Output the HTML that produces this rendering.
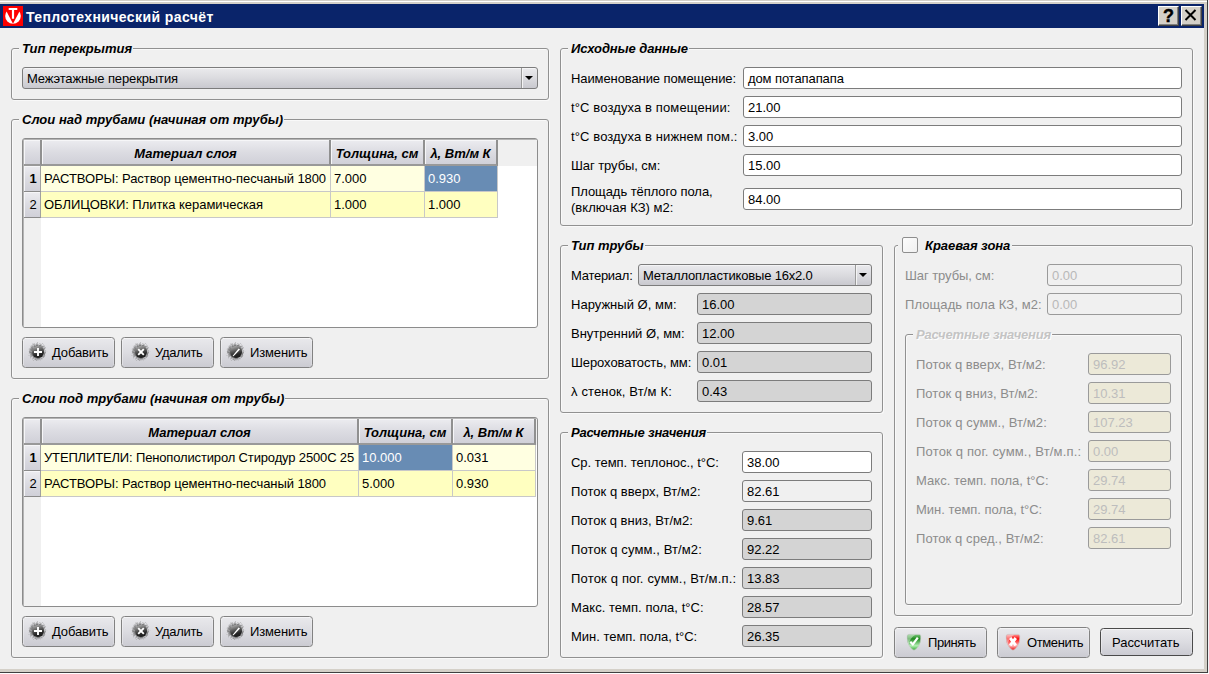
<!DOCTYPE html><html lang="ru"><head><meta charset="utf-8"><title>Теплотехнический расчёт</title><style>
*{box-sizing:border-box;margin:0;padding:0}
html,body{width:1209px;height:674px;overflow:hidden}
body{position:relative;background:#f0f0f0;font:13px "Liberation Sans",sans-serif;color:#000}
.a{position:absolute;white-space:nowrap}
.tb{left:0;top:4px;width:1204px;height:24px;background:#0a246a}
.tt{left:26px;top:6px;height:24px;line-height:23px;color:#fff;font-weight:bold;font-size:14px;letter-spacing:.4px}
.gb{border:1px solid #919191;border-radius:3px;box-shadow:1px 1px 0 #f9f9f9,inset 1px 1px 0 #f9f9f9}
.gt{font-weight:bold;font-style:italic;background:#f0f0f0;padding:0 1px 0 3px;height:16px;line-height:17px}
.gt.d{color:#c4c4c4;text-shadow:1px 1px 0 #fff}
.l{height:22px;line-height:23px}
.l.d{color:#8c8c8c}
.f{height:22px;line-height:22px;border:1px solid #7c7c7c;border-radius:3px;background:#fff;padding-left:4px}
.f.g{background:#d4d4d4}
.f.e{background:#f0f0f0}
.f.d{background:#f0f0f0;color:#b8b8b8;border-color:#9a9a9a}
.f.y{background:#ece9d8;color:#bdbdbd;border-color:#9a9a9a}
.cb{height:22px;line-height:22px;border:1px solid #7c7c7c;border-radius:3px;background:linear-gradient(#eaeaed,#dbdbdf 50%,#c9c9cf);padding-left:4px;box-shadow:inset 0 1px 0 rgba(255,255,255,.5)}
.cb i{position:absolute;right:15px;top:0;width:1px;height:20px;background:#9a9a9a;box-shadow:1px 0 0 #f4f4f4}
.cb b{position:absolute;right:4px;top:8px;width:0;height:0;border:4px solid transparent;border-top:4px solid #000;border-bottom:0}
.bt{height:30px;line-height:28px;border:1px solid #828282;border-radius:3.5px;background:linear-gradient(#e9e9ec,#dcdce1 50%,#cbcbd2);box-shadow:inset 0 1px 0 rgba(255,255,255,.5),inset 1px 0 0 rgba(255,255,255,.35),inset -1px 0 0 rgba(255,255,255,.2)}
.bt span{position:absolute;top:0}
.tbl{border:1px solid #8c8c8c;border-radius:3px;background:#fff;box-shadow:inset 1px 1px 0 #b4b4b4}
.hd{background:linear-gradient(#ececf0,#dcdce2 50%,#d0d0d8);border-right:2px solid #909090;border-bottom:2px solid #999;font-weight:bold;font-style:italic;text-align:center;line-height:27px;box-shadow:inset 1px 1px 0 #f6f6f8}
.rh{background:linear-gradient(#ececf0,#dcdce2 50%,#d0d0d8);border-right:1px solid #a0a0a0;border-bottom:1px solid #8a8a8a;text-align:center;line-height:26px;padding-left:2px;box-shadow:inset 1px 1px 0 #f6f6f8}
.c{overflow:hidden;line-height:25px;padding-left:3px;border-right:1px solid #c8c8c8;border-bottom:1px solid #c8c8c8}
.r1{background:#ffffe1}.r2{background:#ffffc0}
.sel{background:#688cb4;color:#fff}
</style></head><body>
<svg class="a" width="0" height="0" style="left:0;top:0"><defs><filter id="gr" x="-20%" y="-20%" width="140%" height="140%"><feTurbulence type="fractalNoise" baseFrequency="0.550" numOctaves="2" seed="7" result="n"/><feDisplacementMap in="SourceGraphic" in2="n" scale="5" xChannelSelector="R" yChannelSelector="G"/></filter><radialGradient id="sg"><stop offset="0" stop-color="#4a4a4a" stop-opacity=".85"/><stop offset=".68" stop-color="#606060" stop-opacity=".72"/><stop offset=".85" stop-color="#787878" stop-opacity=".45"/><stop offset="1" stop-color="#8a8a8a" stop-opacity=".1"/></radialGradient><linearGradient id="bg" x1="0.200" y1="0" x2="0.500" y2="1"><stop offset="0" stop-color="#b4b4b4"/><stop offset=".42" stop-color="#5c5c5c"/><stop offset=".75" stop-color="#262626"/><stop offset="1" stop-color="#1a1a1a"/></linearGradient></defs></svg>
<div class="a tb"></div>
<div class="a" style="left:1204px;top:0;width:3px;height:672px;background:#d4d0c8"></div>
<div class="a" style="left:1207px;top:0;width:1px;height:673px;background:#404040"></div>
<div class="a" style="left:1208px;top:0;width:1px;height:674px;background:#f2f2f5"></div>
<div class="a" style="left:0;top:0;width:1204px;height:4px;background:#d4d0c8"></div>
<div class="a" style="left:0;top:1px;width:1207px;height:1px;background:#fff"></div>
<div class="a" style="left:0;top:669px;width:1207px;height:3px;background:#d4d0c8"></div>
<div class="a" style="left:0;top:672px;width:1208px;height:1px;background:#404040"></div>
<div class="a" style="left:0;top:673px;width:1209px;height:1px;background:#fff"></div>
<svg class="a" style="left:3px;top:6px" width="20" height="20" viewBox="0 0 20 20"><rect width="20" height="20" fill="#fe0000"/><circle cx="10" cy="10" r="7.8" fill="#fff"/><path d="M1.200 1 L18.800 1 L10 17.800 Z" fill="#fe0000"/><path d="M5.700 2 H14.300 V4.100 H11.100 V12.800 H8.900 V4.100 H5.700 Z" fill="#fff"/></svg>
<div class="a tt" style="left:26px;top:6px;">Теплотехнический расчёт</div>
<div class="a" style="left:1158px;top:6px;width:21px;height:20px;background:#d4d0c8;border:1px solid;border-color:#fff #404040 #404040 #fff;box-shadow:inset -1px -1px 0 #808080"><span class="a" style="left:4px;top:-1px;font:bold 18px 'Liberation Sans',sans-serif;line-height:21px;-webkit-text-stroke:.4px #000">?</span></div>
<div class="a" style="left:1181px;top:6px;width:21px;height:20px;background:#d4d0c8;border:1px solid;border-color:#fff #404040 #404040 #fff;box-shadow:inset -1px -1px 0 #808080"><svg class="a" style="left:2px;top:2px" width="13" height="12" viewBox="0 0 13 12"><path d="M1.500 1 L11.500 11 M11.500 1 L1.500 11" stroke="#000" stroke-width="2"/></svg></div>
<div class="a gb" style="left:11px;top:48px;width:538px;height:52px;"></div>
<div class="a gt" style="left:19px;top:40px;">Тип перекрытия</div>
<div class="a gb" style="left:11px;top:119px;width:538px;height:260px;"></div>
<div class="a gt" style="left:19px;top:111px;letter-spacing:0.021px;">Слои над трубами (начиная от трубы)</div>
<div class="a gb" style="left:11px;top:398px;width:538px;height:260px;"></div>
<div class="a gt" style="left:19px;top:390px;letter-spacing:0.035px;">Слои под трубами (начиная от трубы)</div>
<div class="a gb" style="left:560px;top:48px;width:633px;height:178px;"></div>
<div class="a gt" style="left:568px;top:40px;letter-spacing:-0.093px;">Исходные данные</div>
<div class="a gb" style="left:560px;top:245px;width:323px;height:168px;"></div>
<div class="a gt" style="left:568px;top:237px;">Тип трубы</div>
<div class="a gb" style="left:560px;top:432px;width:323px;height:226px;"></div>
<div class="a gt" style="left:568px;top:424px;letter-spacing:-0.182px;">Расчетные значения</div>
<div class="a gb" style="left:894px;top:245px;width:299px;height:371px;"></div>
<div class="a gt" style="left:-3px;top:237px;"></div>
<div class="a gb" style="left:905px;top:334px;width:277px;height:271px;"></div>
<div class="a gt d" style="left:913px;top:326px;letter-spacing:-0.182px;">Расчетные значения</div>
<div class="a cb" style="left:22px;top:67px;width:516px;height:22px;"><span style="letter-spacing:-0.117px;">Межэтажные перекрытия</span><i></i><b></b></div>
<div class="a tbl" style="left:22px;top:138px;width:516px;height:190px;"></div>
<div class="a hd" style="left:24px;top:140px;width:18px;height:26px;"></div>
<div class="a hd" style="left:42px;top:140px;width:289px;height:26px;">Материал слоя</div>
<div class="a hd" style="left:331px;top:140px;width:94px;height:26px;">Толщина, см</div>
<div class="a hd" style="left:425px;top:140px;width:73px;height:26px;">λ, Вт/м К</div>
<div class="a " style="left:498px;top:140px;width:39px;height:26px;background:#f0f0f0"></div>
<div class="a rh" style="left:24px;top:166px;width:17px;height:26px;font-weight:bold">1</div>
<div class="a c r1" style="left:41px;top:166px;width:290px;height:26px;"><span style="letter-spacing:-0.078px;">РАСТВОРЫ: Раствор цементно-песчаный 1800</span></div>
<div class="a c r1" style="left:331px;top:166px;width:94px;height:26px;">7.000</div>
<div class="a c sel" style="left:425px;top:166px;width:73px;height:26px;">0.930</div>
<div class="a rh" style="left:24px;top:192px;width:17px;height:26px;">2</div>
<div class="a c r2" style="left:41px;top:192px;width:290px;height:26px;"><span style="letter-spacing:-0.040px;">ОБЛИЦОВКИ: Плитка керамическая</span></div>
<div class="a c r2" style="left:331px;top:192px;width:94px;height:26px;">1.000</div>
<div class="a c r2" style="left:425px;top:192px;width:73px;height:26px;">1.000</div>
<div class="a " style="left:24px;top:218px;width:17px;height:109px;background:#f0f0f0"></div>
<div class="a tbl" style="left:22px;top:417px;width:516px;height:190px;"></div>
<div class="a hd" style="left:24px;top:419px;width:18px;height:26px;"></div>
<div class="a hd" style="left:42px;top:419px;width:317px;height:26px;">Материал слоя</div>
<div class="a hd" style="left:359px;top:419px;width:94px;height:26px;">Толщина, см</div>
<div class="a hd" style="left:453px;top:419px;width:83px;height:26px;">λ, Вт/м К</div>
<div class="a " style="left:536px;top:419px;width:1px;height:26px;background:#f0f0f0"></div>
<div class="a rh" style="left:24px;top:445px;width:17px;height:26px;font-weight:bold">1</div>
<div class="a c r1" style="left:41px;top:445px;width:318px;height:26px;"><span style="letter-spacing:-0.151px;">УТЕПЛИТЕЛИ: Пенополистирол Стиродур 2500С 25</span></div>
<div class="a c sel" style="left:359px;top:445px;width:94px;height:26px;">10.000</div>
<div class="a c r1" style="left:453px;top:445px;width:83px;height:26px;">0.031</div>
<div class="a rh" style="left:24px;top:471px;width:17px;height:26px;">2</div>
<div class="a c r2" style="left:41px;top:471px;width:318px;height:26px;"><span style="letter-spacing:-0.078px;">РАСТВОРЫ: Раствор цементно-песчаный 1800</span></div>
<div class="a c r2" style="left:359px;top:471px;width:94px;height:26px;">5.000</div>
<div class="a c r2" style="left:453px;top:471px;width:83px;height:26px;">0.930</div>
<div class="a " style="left:24px;top:497px;width:17px;height:109px;background:#f0f0f0"></div>
<div class="a bt" style="left:22px;top:337px;width:93px;height:31px;"><svg class="a" style="left:3px;top:2px" width="24" height="24" viewBox="0 0 24 24"><g filter="url(#gr)"><ellipse cx="11.400" cy="11.700" rx="9.200" ry="9.200" fill="url(#sg)"/></g><circle cx="12" cy="12" r="6" fill="url(#bg)"/><path d="M12 8v8M8 12h8" stroke="#fff" stroke-width="1.900"/></svg><span style="left:29px;line-height:29px;letter-spacing:-0.119px;">Добавить</span></div>
<div class="a bt" style="left:121px;top:337px;width:93px;height:31px;"><svg class="a" style="left:7px;top:2px" width="24" height="24" viewBox="0 0 24 24"><g filter="url(#gr)"><ellipse cx="11.400" cy="11.700" rx="9.200" ry="9.200" fill="url(#sg)"/></g><circle cx="12" cy="12" r="6" fill="url(#bg)"/><path d="M9.200 9.200l5.600 5.600M14.800 9.200l-5.600 5.600" stroke="#fff" stroke-width="1.900"/></svg><span style="left:33px;line-height:29px;letter-spacing:-0.306px;">Удалить</span></div>
<div class="a bt" style="left:220px;top:337px;width:93px;height:31px;"><svg class="a" style="left:3px;top:2px" width="24" height="24" viewBox="0 0 24 24"><g filter="url(#gr)"><ellipse cx="11.400" cy="11.700" rx="9.200" ry="9.200" fill="url(#sg)"/></g><circle cx="12" cy="12" r="6" fill="url(#bg)"/><path d="M8.300 16.200 L14.600 8.400 L16 9.600 L9.600 16.300 Z" fill="#fff"/></svg><span style="left:29px;line-height:29px;letter-spacing:-0.143px;">Изменить</span></div>
<div class="a bt" style="left:22px;top:616px;width:93px;height:31px;"><svg class="a" style="left:3px;top:2px" width="24" height="24" viewBox="0 0 24 24"><g filter="url(#gr)"><ellipse cx="11.400" cy="11.700" rx="9.200" ry="9.200" fill="url(#sg)"/></g><circle cx="12" cy="12" r="6" fill="url(#bg)"/><path d="M12 8v8M8 12h8" stroke="#fff" stroke-width="1.900"/></svg><span style="left:29px;line-height:29px;letter-spacing:-0.119px;">Добавить</span></div>
<div class="a bt" style="left:121px;top:616px;width:93px;height:31px;"><svg class="a" style="left:7px;top:2px" width="24" height="24" viewBox="0 0 24 24"><g filter="url(#gr)"><ellipse cx="11.400" cy="11.700" rx="9.200" ry="9.200" fill="url(#sg)"/></g><circle cx="12" cy="12" r="6" fill="url(#bg)"/><path d="M9.200 9.200l5.600 5.600M14.800 9.200l-5.600 5.600" stroke="#fff" stroke-width="1.900"/></svg><span style="left:33px;line-height:29px;letter-spacing:-0.306px;">Удалить</span></div>
<div class="a bt" style="left:220px;top:616px;width:93px;height:31px;"><svg class="a" style="left:3px;top:2px" width="24" height="24" viewBox="0 0 24 24"><g filter="url(#gr)"><ellipse cx="11.400" cy="11.700" rx="9.200" ry="9.200" fill="url(#sg)"/></g><circle cx="12" cy="12" r="6" fill="url(#bg)"/><path d="M8.300 16.200 L14.600 8.400 L16 9.600 L9.600 16.300 Z" fill="#fff"/></svg><span style="left:29px;line-height:29px;letter-spacing:-0.143px;">Изменить</span></div>
<div class="a bt" style="left:894px;top:627px;width:93px;height:31px;"><svg class="a" style="left:11px;top:5px" width="16" height="18" viewBox="0 0 16 18"><defs><linearGradient id="s7cc87c" x1="0" y1="0" x2="0" y2="1"><stop offset="0" stop-color="#7cc87c"/><stop offset=".28" stop-color="#1f8a1f"/><stop offset=".72" stop-color="#b4f0b4"/><stop offset="1" stop-color="#2ea82e"/></linearGradient></defs><path d="M2.800 1.400 H13.200 Q14.800 1.400 14.800 3 Q15.200 9.500 12.600 13.200 Q10.800 15.800 8 17.200 Q5.200 15.800 3.400 13.200 Q0.800 9.500 1.200 3 Q1.200 1.400 2.800 1.400 Z" fill="url(#s7cc87c)" stroke="#c8c8c8" stroke-opacity=".8" stroke-width=".8"/><path d="M2.600 2 Q5 1.600 9.500 1.800 Q4.500 4.500 2.400 11.500 Q1.400 7 1.700 3 Q1.800 2.100 2.600 2 Z" fill="#fff" fill-opacity=".42"/><path d="M4.300 8.800 L6.800 11.400 L11.800 4.600" stroke="#fff" stroke-width="2.200" fill="none"/></svg><span style="left:33px;line-height:29px;letter-spacing:-0.426px;">Принять</span></div>
<div class="a bt" style="left:997px;top:627px;width:93px;height:31px;"><svg class="a" style="left:7px;top:5px" width="16" height="18" viewBox="0 0 16 18"><defs><linearGradient id="sff9a9a" x1="0" y1="0" x2="0" y2="1"><stop offset="0" stop-color="#ff9a9a"/><stop offset=".28" stop-color="#fb0a0a"/><stop offset=".72" stop-color="#ffb8b8"/><stop offset="1" stop-color="#f00000"/></linearGradient></defs><path d="M2.800 1.400 H13.200 Q14.800 1.400 14.800 3 Q15.200 9.500 12.600 13.200 Q10.800 15.800 8 17.200 Q5.200 15.800 3.400 13.200 Q0.800 9.500 1.200 3 Q1.200 1.400 2.800 1.400 Z" fill="url(#sff9a9a)" stroke="#c8c8c8" stroke-opacity=".8" stroke-width=".8"/><path d="M2.600 2 Q5 1.600 9.500 1.800 Q4.500 4.500 2.400 11.500 Q1.400 7 1.700 3 Q1.800 2.100 2.600 2 Z" fill="#fff" fill-opacity=".42"/><path d="M5.200 5 L10.800 12.300 M10.800 5 L5.200 12.300" stroke="#fff" stroke-width="3" fill="none"/></svg><span style="left:29px;line-height:29px;letter-spacing:-0.401px;">Отменить</span></div>
<div class="a bt" style="left:1100px;top:628px;width:93px;height:28px;border-color:#4a4a4a"><span style="left:11px;line-height:28px;letter-spacing:-0.034px;">Рассчитать</span></div>
<div class="a l" style="left:571px;top:67px;letter-spacing:-0.097px;">Наименование помещение:</div>
<div class="a f " style="left:743px;top:67px;width:439px;height:22px;letter-spacing:-0.100px;">дом потапапапа</div>
<div class="a l" style="left:571px;top:96px;letter-spacing:0.122px;">t°C воздуха в помещении:</div>
<div class="a f " style="left:743px;top:96px;width:439px;height:22px;">21.00</div>
<div class="a l" style="left:571px;top:125px;letter-spacing:0.113px;">t°C воздуха в нижнем пом.:</div>
<div class="a f " style="left:743px;top:125px;width:439px;height:22px;">3.00</div>
<div class="a l" style="left:571px;top:154px;letter-spacing:-0.075px;">Шаг трубы, см:</div>
<div class="a f " style="left:743px;top:154px;width:439px;height:22px;">15.00</div>
<div class="a l" style="left:571px;top:184px;line-height:16px;height:34px"><span style="letter-spacing:-0.072px;">Площадь тёплого пола,</span><br><span style="letter-spacing:0.045px;">(включая КЗ) м2:</span></div>
<div class="a f " style="left:743px;top:188px;width:439px;height:22px;">84.00</div>
<div class="a l" style="left:571px;top:264px;letter-spacing:-0.266px;">Материал:</div>
<div class="a cb" style="left:638px;top:264px;width:234px;height:22px;"><span style="letter-spacing:-0.181px;">Металлопластиковые 16x2.0</span><i></i><b></b></div>
<div class="a l" style="left:571px;top:293px;letter-spacing:0.016px;">Наружный Ø, мм:</div>
<div class="a f g" style="left:697px;top:293px;width:175px;height:22px;">16.00</div>
<div class="a l" style="left:571px;top:322px;letter-spacing:-0.029px;">Внутренний Ø, мм:</div>
<div class="a f g" style="left:697px;top:322px;width:175px;height:22px;">12.00</div>
<div class="a l" style="left:571px;top:351px;letter-spacing:-0.085px;">Шероховатость, мм:</div>
<div class="a f g" style="left:697px;top:351px;width:175px;height:22px;">0.01</div>
<div class="a l" style="left:571px;top:380px;letter-spacing:0.140px;">λ стенок, Вт/м К:</div>
<div class="a f g" style="left:697px;top:380px;width:175px;height:22px;">0.43</div>
<div class="a l" style="left:571px;top:451px;letter-spacing:-0.031px;">Ср. темп. теплонос., t°C:</div>
<div class="a f " style="left:742px;top:451px;width:130px;height:22px;">38.00</div>
<div class="a l" style="left:571px;top:480px;letter-spacing:0.049px;">Поток q вверх, Вт/м2:</div>
<div class="a f e" style="left:742px;top:480px;width:130px;height:22px;">82.61</div>
<div class="a l" style="left:571px;top:509px;letter-spacing:0.015px;">Поток q вниз, Вт/м2:</div>
<div class="a f g" style="left:742px;top:509px;width:130px;height:22px;">9.61</div>
<div class="a l" style="left:571px;top:538px;letter-spacing:0.108px;">Поток q сумм., Вт/м2:</div>
<div class="a f g" style="left:742px;top:538px;width:130px;height:22px;">92.22</div>
<div class="a l" style="left:571px;top:567px;letter-spacing:0.178px;">Поток q пог. сумм., Вт/м.п.:</div>
<div class="a f g" style="left:742px;top:567px;width:130px;height:22px;">13.83</div>
<div class="a l" style="left:571px;top:596px;letter-spacing:0.034px;">Макс. темп. пола, t°C:</div>
<div class="a f g" style="left:742px;top:596px;width:130px;height:22px;">28.57</div>
<div class="a l" style="left:571px;top:625px;letter-spacing:-0.018px;">Мин. темп. пола, t°C:</div>
<div class="a f g" style="left:742px;top:625px;width:130px;height:22px;">26.35</div>
<div class="a " style="left:898px;top:237px;width:114px;height:17px;background:#f0f0f0"></div>
<div class="a " style="left:902px;top:237px;width:16px;height:16px;background:linear-gradient(135deg,#fdfdfd,#f0f0f0);border:1px solid #8e8e8e;border-radius:2px"></div>
<div class="a gt" style="left:922px;top:237px;background:none;letter-spacing:-0.064px;">Краевая зона</div>
<div class="a l d" style="left:905px;top:264px;letter-spacing:-0.075px;">Шаг трубы, см:</div>
<div class="a f d" style="left:1047px;top:264px;width:135px;height:22px;">0.00</div>
<div class="a l d" style="left:905px;top:293px;letter-spacing:0.090px;">Площадь пола КЗ, м2:</div>
<div class="a f d" style="left:1047px;top:293px;width:135px;height:22px;">0.00</div>
<div class="a l d" style="left:916px;top:353px;letter-spacing:0.049px;">Поток q вверх, Вт/м2:</div>
<div class="a f y" style="left:1088px;top:353px;width:83px;height:22px;">96.92</div>
<div class="a l d" style="left:916px;top:382px;letter-spacing:0.015px;">Поток q вниз, Вт/м2:</div>
<div class="a f y" style="left:1088px;top:382px;width:83px;height:22px;">10.31</div>
<div class="a l d" style="left:916px;top:411px;letter-spacing:0.108px;">Поток q сумм., Вт/м2:</div>
<div class="a f y" style="left:1088px;top:411px;width:83px;height:22px;">107.23</div>
<div class="a l d" style="left:916px;top:440px;letter-spacing:0.178px;">Поток q пог. сумм., Вт/м.п.:</div>
<div class="a f y" style="left:1088px;top:440px;width:83px;height:22px;">0.00</div>
<div class="a l d" style="left:916px;top:469px;letter-spacing:0.034px;">Макс. темп. пола, t°C:</div>
<div class="a f y" style="left:1088px;top:469px;width:83px;height:22px;">29.74</div>
<div class="a l d" style="left:916px;top:498px;letter-spacing:-0.018px;">Мин. темп. пола, t°C:</div>
<div class="a f y" style="left:1088px;top:498px;width:83px;height:22px;">29.74</div>
<div class="a l d" style="left:916px;top:527px;letter-spacing:0.074px;">Поток q сред., Вт/м2:</div>
<div class="a f y" style="left:1088px;top:527px;width:83px;height:22px;">82.61</div>
</body></html>
